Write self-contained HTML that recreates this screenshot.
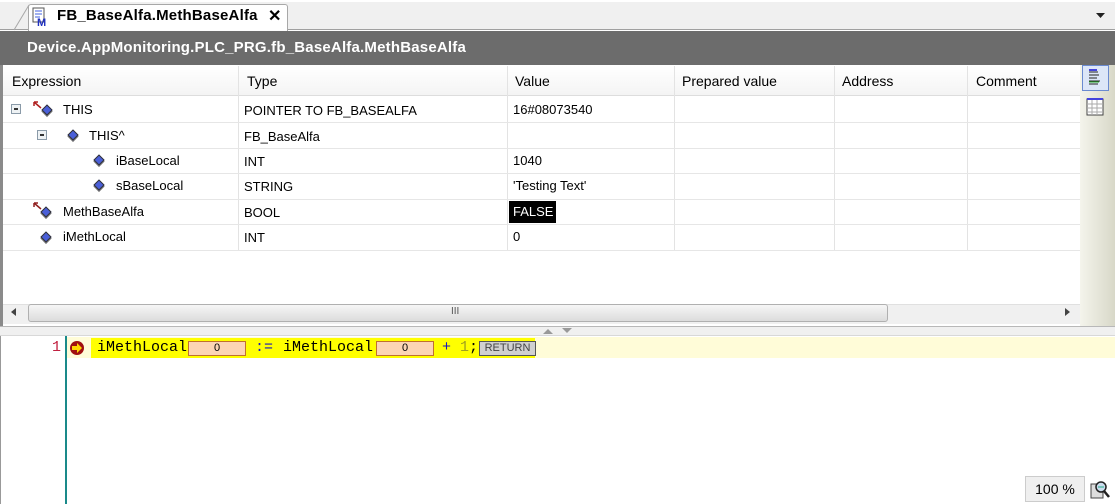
<!DOCTYPE html>
<html><head><meta charset="utf-8"><style>
*{margin:0;padding:0;box-sizing:border-box}
body{width:1115px;height:504px;overflow:hidden;background:#fff;font-family:"Liberation Sans",sans-serif;font-size:13px;color:#000;position:relative}
.a{position:absolute}
.t{position:absolute;white-space:nowrap}
.hl{position:absolute;left:3px;width:1077px;height:1px;background:#e6e6e6}
.vl{position:absolute;top:66px;height:184px;width:1px;background:#e3e3e3}
.ic{position:absolute;width:8px;height:8px;background:#4a5fd8;transform:rotate(45deg);border:1px solid #333;box-shadow:1px 1px 0 #777}
.mx{position:absolute;width:10px;height:10px;border:1px solid #8a9aa8;background:#eef2f4}
.mx:after{content:"";position:absolute;left:2px;top:3px;width:4px;height:2px;background:#333}
.code{font-family:"Liberation Mono",monospace;font-size:15px}
.box{position:absolute;top:341px;height:15px;background:#fcd5b5;border:1px solid #c07030;font-family:"Liberation Sans",sans-serif;font-size:11px;text-align:center;line-height:13px}
</style></head><body>
<div class="a" style="left:0;top:0;width:1115px;height:30px;background:#f0f0f0;border-bottom:1px solid #a0a0a0"></div>
<div class="a" style="left:0;top:0;width:1115px;height:2px;background:#fff"></div>
<div class="a" style="left:28px;top:4px;width:260px;height:27px;background:#fff;border:1px solid #a8a8a8;border-bottom:none;border-radius:3px 3px 0 0"></div>
<svg class="a" style="left:14px;top:4px" width="16" height="27"><path d="M0 26 L15 1" stroke="#a8a8a8" fill="none"/></svg>
<svg class="a" style="left:32px;top:7px" width="18" height="19"><rect x="1" y="1" width="11" height="14" fill="#fff" stroke="#555"/><path d="M3 4h7M3 7h7M3 10h5" stroke="#4060e0"/><text x="5" y="19" font-family="Liberation Sans" font-weight="bold" font-size="11" fill="#2030c0">M</text></svg>
<div class="t" style="left:57px;top:7px;font-weight:bold;font-size:15px;letter-spacing:0.2px">FB_BaseAlfa.MethBaseAlfa</div>
<div class="t" style="left:268px;top:6px;font-weight:bold;font-size:16px">✕</div>
<svg class="a" style="left:1096px;top:13px" width="10" height="6"><path d="M0 0h9L4.5 5z" fill="#222"/></svg>
<div class="a" style="left:0;top:31px;width:1115px;height:34px;background:#6c6c6c"></div>
<div class="t" style="left:27px;top:39px;color:#fff;font-weight:bold;font-size:15px;letter-spacing:0.2px">Device.AppMonitoring.PLC_PRG.fb_BaseAlfa.MethBaseAlfa</div>
<div class="a" style="left:0;top:65px;width:3px;height:265px;background:#8a8a8a"></div>
<div class="a" style="left:3px;top:66px;width:1077px;height:30px;background:linear-gradient(#fff,#f4f4f4);border-bottom:1px solid #ddd"></div>
<div class="vl" style="left:238px"></div><div class="vl" style="left:507px"></div><div class="vl" style="left:674px"></div><div class="vl" style="left:834px"></div><div class="vl" style="left:967px"></div>
<div class="t" style="left:12px;top:73px;font-size:14px">Expression</div>
<div class="t" style="left:247px;top:73px;font-size:14px">Type</div>
<div class="t" style="left:515px;top:73px;font-size:14px">Value</div>
<div class="t" style="left:682px;top:73px;font-size:14px">Prepared value</div>
<div class="t" style="left:842px;top:73px;font-size:14px">Address</div>
<div class="t" style="left:976px;top:73px;font-size:14px">Comment</div>
<div class="hl" style="top:122px"></div><div class="hl" style="top:148px"></div><div class="hl" style="top:173px"></div><div class="hl" style="top:199px"></div><div class="hl" style="top:224px"></div><div class="hl" style="top:250px"></div>
<div class="mx" style="left:11px;top:104px"></div>
<svg class="a" style="left:33px;top:101px" width="10" height="8"><path d="M1 1L8 7M1 1v4M1 1h4" stroke="#b02020" stroke-width="1.5" fill="none"/></svg>
<div class="ic" style="left:43px;top:106px"></div>
<div class="t" style="left:63px;top:102px">THIS</div>
<div class="t" style="left:244px;top:103px">POINTER TO FB_BASEALFA</div>
<div class="t" style="left:513px;top:102px">16#08073540</div>
<div class="mx" style="left:37px;top:130px"></div>
<div class="ic" style="left:69px;top:131px"></div>
<div class="t" style="left:89px;top:128px">THIS^</div>
<div class="t" style="left:244px;top:129px">FB_BaseAlfa</div>
<div class="ic" style="left:95px;top:156px"></div>
<div class="t" style="left:116px;top:153px">iBaseLocal</div>
<div class="t" style="left:244px;top:154px">INT</div>
<div class="t" style="left:513px;top:153px">1040</div>
<div class="ic" style="left:95px;top:181px"></div>
<div class="t" style="left:116px;top:178px">sBaseLocal</div>
<div class="t" style="left:244px;top:179px">STRING</div>
<div class="t" style="left:513px;top:178px">'Testing Text'</div>
<svg class="a" style="left:33px;top:202px" width="10" height="8"><path d="M1 1L8 7M1 1v4M1 1h4" stroke="#902020" stroke-width="1.5" fill="none"/></svg>
<div class="ic" style="left:42px;top:208px"></div>
<div class="t" style="left:63px;top:204px">MethBaseAlfa</div>
<div class="t" style="left:244px;top:205px">BOOL</div>
<div class="a" style="left:509px;top:201px;width:47px;height:22px;background:#000"></div>
<div class="t" style="left:513px;top:204px;color:#fff">FALSE</div>
<div class="ic" style="left:42px;top:233px"></div>
<div class="t" style="left:63px;top:229px">iMethLocal</div>
<div class="t" style="left:244px;top:230px">INT</div>
<div class="t" style="left:513px;top:229px">0</div>
<div class="a" style="left:3px;top:304px;width:1077px;height:20px;background:#f0f0f0;border-top:1px solid #e0e0e0"></div>
<div class="a" style="left:28px;top:304px;width:860px;height:18px;background:linear-gradient(#f6f6f6,#dcdcdc);border:1px solid #b0b0b0;border-radius:3px"></div>
<div class="t" style="left:451px;top:306px;font-size:10px;color:#555">III</div>
<svg class="a" style="left:11px;top:308px" width="6" height="9"><path d="M5 0v8L0 4z" fill="#444"/></svg>
<svg class="a" style="left:1065px;top:308px" width="6" height="9"><path d="M0 0v8L5 4z" fill="#444"/></svg>
<div class="a" style="left:1080px;top:65px;width:35px;height:265px;background:linear-gradient(90deg,#f4f4ec,#d8d8c8)"></div>
<div class="a" style="left:1082px;top:65px;width:27px;height:26px;border:1px solid #6a8ad0;background:#dce6f8"></div>
<svg class="a" style="left:1087px;top:69px" width="16" height="18"><path d="M2 3h9M2 6h10M2 9h8M2 12h11M2 15h9" stroke="#222"/><path d="M2 13h10" stroke="#2a2"/><path d="M2 1h8" stroke="#44d" stroke-width="2"/></svg>
<svg class="a" style="left:1086px;top:97px" width="19" height="20"><rect x="1" y="2" width="16" height="16" fill="#fff" stroke="#444"/><path d="M1 2h16" stroke="#44d" stroke-width="2"/><path d="M1 7h16M1 11h16M1 15h16M6 3v15M11 3v15" stroke="#aaa"/></svg>
<div class="a" style="left:0;top:326px;width:1115px;height:10px;background:#f0f0f0;border-top:1px solid #b8b8b8;border-bottom:1px solid #d8d8d8"></div>
<svg class="a" style="left:540px;top:327px" width="36" height="8"><path d="M3 7l5-5 5 5z" fill="#999"/><path d="M22 1h10l-5 5z" fill="#999"/></svg>
<div class="a" style="left:0;top:336px;width:1115px;height:168px;background:#fff;border-left:1px solid #999"></div>
<div class="a" style="left:65px;top:336px;width:2px;height:168px;background:#1a8a8a"></div>
<div class="a" style="left:67px;top:337px;width:1048px;height:21px;background:#fffcd8"></div>
<div class="a" style="left:91px;top:338px;width:444px;height:20px;background:#ffff00"></div>
<div class="t code" style="left:52px;top:339px;color:#c02040">1</div>
<svg class="a" style="left:69px;top:340px" width="16" height="16"><circle cx="8" cy="8" r="7" fill="#a01010"/><path d="M3 6h5V3l5 5-5 5v-3H3z" fill="#ffd800"/></svg>
<div class="t code" style="left:97px;top:339px;color:#000">iMethLocal</div>
<div class="box" style="left:188px;width:58px">0</div>
<div class="t code" style="left:255px;top:339px;color:#1818c0">:=</div>
<div class="t code" style="left:283px;top:339px;color:#000">iMethLocal</div>
<div class="box" style="left:376px;width:58px">0</div>
<div class="t code" style="left:442px;top:339px;color:#1818c0">+</div>
<div class="t code" style="left:460px;top:339px;color:#a0a020">1</div>
<div class="t code" style="left:469px;top:339px;color:#000">;</div>
<div class="a" style="left:479px;top:341px;width:57px;height:15px;background:#d0d0d0;border:1px solid #555;font-size:11px;line-height:13px;text-align:center;color:#444">RETURN</div>
<div class="a" style="left:1025px;top:476px;width:60px;height:26px;background:#efefef;border:1px solid #ccc;font-size:14px;line-height:24px;text-align:center">100 %</div>
<svg class="a" style="left:1088px;top:478px" width="24" height="24"><rect x="3" y="6" width="12" height="14" fill="#ddd" stroke="#444"/><circle cx="13" cy="9" r="5" fill="#cde" stroke="#222" stroke-width="1.5"/><path d="M16 13l5 6" stroke="#222" stroke-width="2.5"/><path d="M10 9h6" stroke="#2a8"/></svg>
</body></html>
